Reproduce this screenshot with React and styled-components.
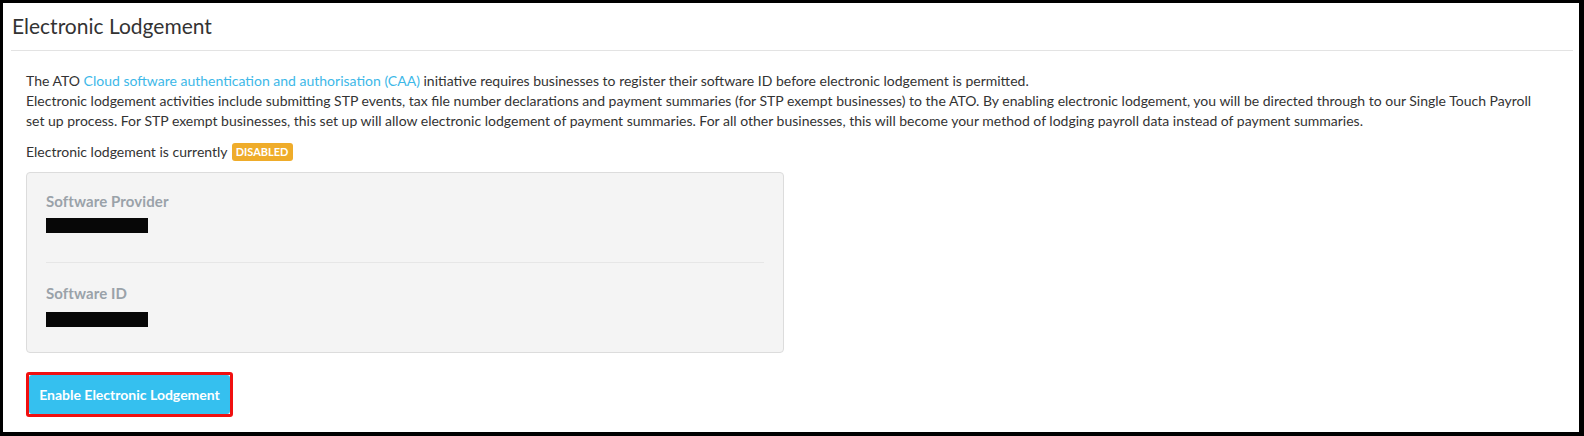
import React from "react";
import styled, { createGlobalStyle } from "styled-components";

const GlobalStyle = createGlobalStyle`
  html, body {
    margin: 0;
    padding: 0;
    background: #fff;
  }
  body {
    font-family: Lato, "Liberation Sans", Arial, sans-serif;
    color: #333;
  }
`;

const Frame = styled.div`
  box-sizing: border-box;
  width: 1584px;
  height: 436px;
  border: 3px solid #000;
  border-right-width: 5px;
  border-bottom-width: 4px;
  padding: 0 6px 0 8px;
  background: #fff;
  overflow: hidden;
`;

const Header = styled.div`
  height: 48px;
  border-bottom: 1px solid #e3e3e3;
  display: flex;
  align-items: center;
  padding: 0 0 3px 1px;
  box-sizing: border-box;
`;

const Title = styled.h2`
  margin: 0;
  font-size: 21px;
  font-weight: 400;
  color: #333;
`;

const Body = styled.div`
  padding: 20px 16px 0 15px;
`;

const Paragraph = styled.p`
  margin: 0 0 ${(p) => p.$gap || 0}px;
  font-size: 14px;
  line-height: 20px;
  max-width: ${(p) => p.$maxWidth || "none"};
`;

const Link = styled.a`
  color: #3db8e8;
  text-decoration: none;
`;

const StatusLine = styled.div`
  display: flex;
  align-items: center;
  gap: 4px;
  font-size: 14px;
  line-height: 20px;
  margin-bottom: 10px;
`;

const Badge = styled.span`
  display: inline-flex;
  align-items: center;
  justify-content: center;
  width: 61px;
  height: 18px;
  border-radius: 3px;
  background: #efac2a;
  color: #fff;
  font-size: 11px;
  font-weight: 700;
  text-transform: uppercase;
`;

const Card = styled.div`
  box-sizing: border-box;
  width: 758px;
  background: #f4f4f4;
  border: 1px solid #dcdcdc;
  border-radius: 4px;
  padding: 0 19px;
`;

const Field = styled.div`
  padding: ${(p) => (p.$first ? "18px 0 29px" : "20px 0 25px")};
  border-bottom: ${(p) => (p.$first ? "1px solid #e6e6e6" : "none")};
`;

const FieldLabel = styled.div`
  font-size: 15px;
  line-height: 20px;
  font-weight: 700;
  letter-spacing: 0.1px;
  color: #9aa2a9;
`;

const Redacted = styled.div`
  width: 102px;
  height: 15px;
  margin-top: ${(p) => (p.$first ? 7 : 9)}px;
  background: #070707;
`;

const Highlight = styled.div`
  display: inline-block;
  margin-top: 19px;
  border: 3px solid #f01010;
  border-radius: 3px;
`;

const PrimaryButton = styled.button`
  display: flex;
  align-items: center;
  justify-content: center;
  width: 201px;
  height: 39px;
  border: none;
  border-radius: 3px;
  background: #35c0ef;
  color: #fff;
  font-family: inherit;
  font-size: 14px;
  font-weight: 700;
  cursor: pointer;
`;

export default function App() {
  return (
    <>
      <GlobalStyle />
      <Frame>
        <Header>
          <Title>Electronic Lodgement</Title>
        </Header>
        <Body>
          <Paragraph>
            The ATO{" "}
            <Link href="#">
              Cloud software authentication and authorisation (CAA)
            </Link>{" "}
            initiative requires businesses to register their software ID before
            electronic lodgement is permitted.
          </Paragraph>
          <Paragraph $gap={11} $maxWidth="1512px">
            Electronic lodgement activities include submitting STP events, tax
            file number declarations and payment summaries (for STP exempt
            businesses) to the ATO. By enabling electronic lodgement, you will
            be directed through to our Single Touch Payroll set up process. For
            STP exempt businesses, this set up will allow electronic lodgement
            of payment summaries. For all other businesses, this will become
            your method of lodging payroll data instead of payment summaries.
          </Paragraph>
          <StatusLine>
            Electronic lodgement is currently <Badge>Disabled</Badge>
          </StatusLine>
          <Card>
            <Field $first>
              <FieldLabel>Software Provider</FieldLabel>
              <Redacted $first />
            </Field>
            <Field>
              <FieldLabel>Software ID</FieldLabel>
              <Redacted />
            </Field>
          </Card>
          <Highlight>
            <PrimaryButton>Enable Electronic Lodgement</PrimaryButton>
          </Highlight>
        </Body>
      </Frame>
    </>
  );
}
